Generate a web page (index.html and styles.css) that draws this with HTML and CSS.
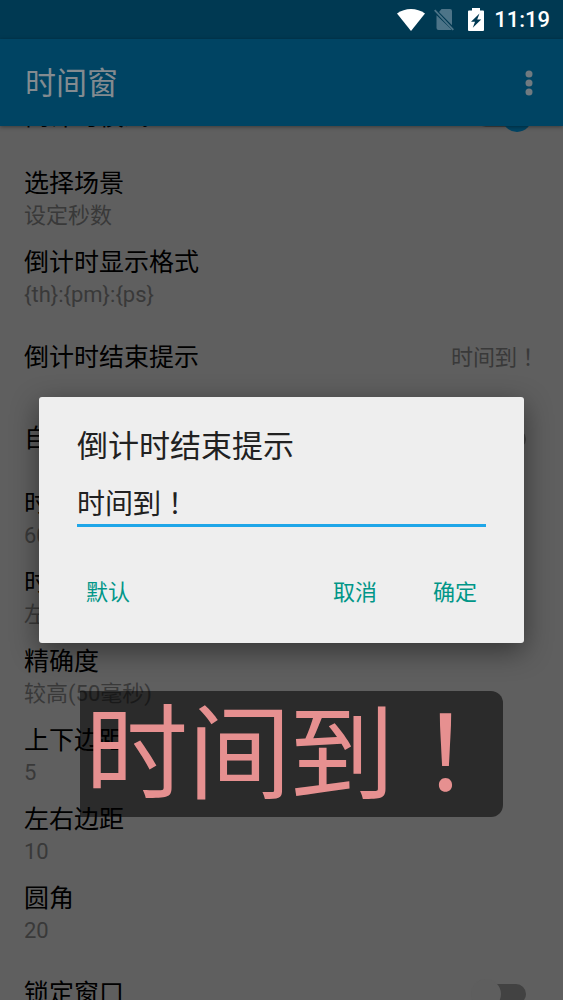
FILE: index.html
```html
<!DOCTYPE html>
<html lang="zh-CN">
<head>
<meta charset="utf-8">
<meta name="viewport" content="width=device-width, initial-scale=1">
<title>时间窗</title>
<link rel="stylesheet" href="styles.css">
</head>
<body>
<div class="screen">
  <div class="status-bar">
    <svg class="icon-wifi" viewBox="0 0 28 22" aria-hidden="true"><path d="M14 22 0 4.6C8-1.5 20-1.5 28 4.6z" fill="#fff"/></svg>
    <svg class="icon-sim" viewBox="0 0 20 22" aria-hidden="true"><path d="M7.500 0H16q2 0 2 2v14.300L5 3zM2.500 6.200 17.500 20.500q-.6.500-1.500.500H4.500q-2 0-2-2z" fill="#4d7488"/><path d="m.7 1.200 18.600 19.600" stroke="#4d7488" stroke-width="1.800"/></svg>
    <svg class="icon-battery" viewBox="0 0 16 23" aria-hidden="true"><path fill-rule="evenodd" d="M4 0h8v2.500h3q1 0 1 1V22q0 1-1 1H1q-1 0-1-1V3.500q0-1 1-1h3zM11.500 5.500 3 13.800h4L4.800 19.800 13.200 11.500H9.200z" fill="#fff"/></svg>
    <span class="clock">11:19</span>
  </div>
  <header class="app-bar">
    <h1 class="app-title">时间窗</h1>
    <button class="overflow" type="button" aria-label="更多选项">
      <svg viewBox="0 0 8 26" aria-hidden="true"><g fill="#707a80"><circle cx="4" cy="4" r="3.500"/><circle cx="4" cy="13" r="3.500"/><circle cx="4" cy="22" r="3.500"/></g></svg>
    </button>
  </header>
  <main class="content">
    <ul class="settings">
      <li class="row row-single row-first"><label class="row-title" for="countdown">倒计时模式</label><input class="switch" id="countdown" type="checkbox" checked></li>
      <li class="row"><span class="row-title">选择场景</span><span class="row-summary">设定秒数</span></li>
      <li class="row"><span class="row-title">倒计时显示格式</span><span class="row-summary">{th}:{pm}:{ps}</span></li>
      <li class="row row-single"><span class="row-title">倒计时结束提示</span><span class="row-summary centered-mark">时间到！</span></li>
      <li class="row row-single"><label class="row-title" for="auto">自动</label><input class="switch" id="auto" type="checkbox"></li>
      <li class="row"><span class="row-title">时间</span><span class="row-summary">60</span></li>
      <li class="row"><span class="row-title">时间</span><span class="row-summary">左</span></li>
      <li class="row"><span class="row-title">精确度</span><span class="row-summary">较高(50毫秒)</span></li>
      <li class="row"><span class="row-title">上下边距</span><span class="row-summary">5</span></li>
      <li class="row"><span class="row-title">左右边距</span><span class="row-summary">10</span></li>
      <li class="row"><span class="row-title">圆角</span><span class="row-summary">20</span></li>
      <li class="row row-single"><label class="row-title" for="lock">锁定窗口</label><input class="switch" id="lock" type="checkbox"></li>
    </ul>
  </main>
  <div class="float-window centered-mark">时间到！</div>
  <div class="dialog-layer">
    <form class="dialog" role="dialog" aria-labelledby="dialog-title">
      <h2 class="dialog-title"><label id="dialog-title" for="message">倒计时结束提示</label></h2>
      <input class="dialog-input centered-mark" id="message" type="text" value="时间到！">
      <div class="dialog-actions">
        <button class="action action-start" type="button">默认</button>
        <button class="action" type="button">取消</button>
        <button class="action" type="button">确定</button>
      </div>
    </form>
  </div>
</div>
</body>
</html>
```
FILE: styles.css
```css
* {
  box-sizing: border-box;
}

body {
  margin: 0;
  background: #5f5f5f;
  color: #000;
  font-family: Roboto, "Noto Sans CJK SC", sans-serif;
}

button,
input {
  font-family: inherit;
}

.screen {
  position: relative;
  display: flex;
  flex-direction: column;
  height: 100vh;
  overflow: hidden;
}

/* Full-width punctuation sits in the middle of its cell */
.centered-mark {
  font-family: Roboto, "Noto Sans CJK JP", sans-serif;
  font-feature-settings: "locl" 0;
}

.status-bar {
  position: relative;
  z-index: 1;
  flex: none;
  display: flex;
  align-items: center;
  justify-content: flex-end;
  height: 39px;
  padding-right: 13px;
  background: #003952;
}

.icon-wifi {
  width: 28px;
  height: 22px;
  margin-right: 9px;
}

.icon-sim {
  width: 20px;
  height: 22px;
  margin-right: 14px;
}

.icon-battery {
  width: 16px;
  height: 23px;
  margin-right: 10px;
}

.clock {
  color: #fff;
  font-size: 22px;
  font-weight: 500;
  line-height: 39px;
}

.app-bar {
  position: relative;
  z-index: 1;
  flex: none;
  display: flex;
  align-items: center;
  justify-content: space-between;
  height: 87px;
  padding: 0 14px 0 25px;
  background: #004463;
  box-shadow: 0 1px 4px rgba(0, 0, 0, 0.4);
}

.app-title {
  margin: 0;
  padding-top: 3px;
  color: #838b90;
  font-size: 31px;
  font-weight: 400;
  line-height: 44px;
}

.overflow {
  display: flex;
  justify-content: center;
  width: 40px;
  padding: 8px 0;
  border: 0;
  background: none;
}

.overflow svg {
  width: 8px;
  height: 26px;
}

.content {
  flex: 1;
  min-height: 0;
}

/* List is scrolled partly beneath the app bar */
.settings {
  margin: -50px 0 0;
  padding: 0;
  list-style: none;
}

.row {
  display: flex;
  flex-direction: column;
  height: 79px;
  padding: 8px 24px;
}

.row-single {
  flex-direction: row;
  align-items: center;
  justify-content: space-between;
  height: 81px;
}

.row-first {
  margin-bottom: 2px;
}

.row-title {
  font-size: 25px;
  line-height: 34px;
}

.row-summary {
  color: #393939;
  font-size: 22px;
  line-height: 30px;
}

.switch {
  position: relative;
  width: 76px;
  height: 30px;
  margin: 0;
  appearance: none;
}

.switch::before {
  content: "";
  position: absolute;
  inset: 5px 13px;
  border-radius: 10px;
  background: #424242;
}

.switch::after {
  content: "";
  position: absolute;
  top: 0;
  left: 8px;
  width: 30px;
  height: 30px;
  border-radius: 50%;
  background: #5e5e5e;
}

.switch:checked::after {
  left: 39px;
  background: #004463;
}

.float-window {
  position: absolute;
  top: 691px;
  left: 80px;
  padding: 3px 6px 0 5px;
  border-radius: 0 12px 12px 0;
  background: rgba(0, 0, 0, 0.55);
  color: #e69090;
  font-size: 103px;
  line-height: 123px;
  white-space: nowrap;
}

.dialog-layer {
  position: absolute;
  z-index: 2;
  inset: 39px 0 0;
  display: flex;
  align-items: center;
  padding: 0 39px;
}

.dialog {
  flex: 1;
  min-width: 0;
  padding: 28px 38px 25px;
  border-radius: 3px;
  background: #eee;
  box-shadow: 0 8px 28px rgba(0, 0, 0, 0.45);
}

.dialog-title {
  margin: 0;
  color: #212121;
  font-size: 31px;
  font-weight: 400;
  line-height: 44px;
}

.dialog-input {
  display: block;
  width: 100%;
  height: 46px;
  margin-top: 12px;
  padding: 0;
  border: 0;
  border-bottom: 3px solid #1fa6e8;
  border-radius: 0;
  outline: 0;
  background: none;
  color: #212121;
  font-size: 28px;
}

.dialog-actions {
  display: flex;
  gap: 12px;
  margin: 35px -13px 0;
}

.action {
  width: 88px;
  height: 56px;
  padding: 0;
  border: 0;
  background: none;
  color: #009688;
  font-size: 22px;
}

.action-start {
  margin-right: auto;
}
```
